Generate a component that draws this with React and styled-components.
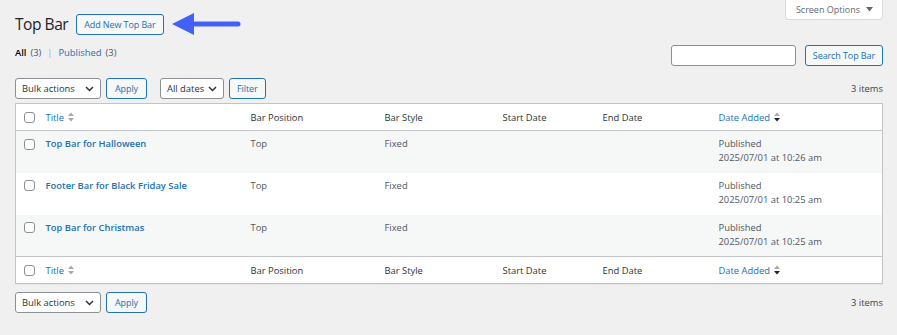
import React from 'react';
import styled, { createGlobalStyle } from 'styled-components';

const GlobalStyle = createGlobalStyle`
  body {
    margin: 0;
    background: #f0f0f1;
    font-family: "Open Sans", "Liberation Sans", sans-serif;
    font-size: 9.4px;
    color: #3c434a;
  }
`;

const Wrap = styled.div`
  padding: 0 14px 0 15px;
`;

const Top = styled.div`
  display: flex;
  justify-content: space-between;
  align-items: flex-start;
`;

const TitleRow = styled.div`
  display: flex;
  align-items: center;
  gap: 8px;
  padding-top: 13px;
`;

const Heading = styled.h1`
  margin: 0 0 1px;
  font-size: 15.6px;
  font-weight: 400;
  letter-spacing: -0.5px;
  line-height: 20px;
  color: #1d2327;
`;

const Button = styled.button`
  height: 21px;
  padding: 0 ${p => p.$px || 7}px;
  border: 1px solid #2271b1;
  border-radius: 3px;
  background: #f6f7f7;
  color: #2271b1;
  font-family: inherit;
  font-size: 9px;
  letter-spacing: -0.1px;
  line-height: 1;
  cursor: pointer;
`;

const ScreenTab = styled.div`
  display: flex;
  align-items: center;
  gap: 6px;
  height: 20px;
  padding: 0 9px 0 10px;
  background: #fff;
  border: 1px solid #dcdcde;
  border-top: none;
  border-radius: 0 0 4px 4px;
  color: #646970;
  font-size: 9px;
  box-sizing: border-box;
`;

const SubRow = styled.div`
  display: flex;
  justify-content: space-between;
  align-items: flex-start;
  margin-top: 10px;
`;

const SubSub = styled.div`
  display: flex;
  align-items: center;
  gap: 4px;
  color: #50575e;
  padding-top: 1px;
`;

const Current = styled.span`
  color: #000;
  font-weight: 600;
`;

const Sep = styled.span`
  color: #a7aaad;
  margin: 0 2px;
`;

const Link = styled.a`
  color: #2271b1;
  text-decoration: none;
  font-weight: ${p => (p.$bold ? 600 : 400)};
`;

const SearchBox = styled.div`
  display: flex;
  gap: 9px;
`;

const Input = styled.input`
  width: 125px;
  height: 21px;
  box-sizing: border-box;
  border: 1px solid #8c8f94;
  border-radius: 3px;
  background: #fff;
`;

const Nav = styled.div`
  display: flex;
  justify-content: space-between;
  align-items: center;
  margin: ${p => p.$m};
`;

const Actions = styled.div`
  display: flex;
  align-items: center;
  gap: 5px;
  margin-right: ${p => p.$mr || 0}px;
`;

const Group = styled.div`
  display: flex;
  align-items: center;
`;

const Select = styled.div`
  display: flex;
  align-items: center;
  justify-content: space-between;
  width: ${p => p.$w}px;
  height: 21px;
  box-sizing: border-box;
  padding: 0 6px;
  border: 1px solid #8c8f94;
  border-radius: 3px;
  background: #fff;
  color: #2c3338;
`;

const Count = styled.span`
  color: #3c434a;
`;

const Table = styled.table`
  width: 100%;
  table-layout: fixed;
  border-collapse: collapse;
  background: #fff;
  border: 1px solid #c3c4c7;
  box-shadow: 0 1px 1px rgba(0, 0, 0, 0.04);
`;

const Th = styled.th`
  height: 27px;
  padding: 0 ${p => (p.$check ? '0 0 8px' : '7px')};
  text-align: left;
  font-weight: 400;
  color: #2c3338;
  border-${p => p.$side}: 1px solid #c3c4c7;
  box-sizing: border-box;
`;

const Tr = styled.tr`
  background: ${p => (p.$alt ? '#f6f7f7' : '#fff')};
`;

const Td = styled.td`
  height: 42px;
  padding: ${p => (p.$check ? '6px 0 0 8px' : '6px 7px 0')};
  vertical-align: top;
  color: #50575e;
  line-height: 14px;
  box-sizing: border-box;
`;

const CheckCell = styled.div`
  display: flex;
  align-items: center;
  height: ${p => p.$h}px;
`;

const Box = styled.span`
  display: block;
  flex-shrink: 0;
  width: 11px;
  height: 11px;
  box-sizing: border-box;
  border: 1px solid #8c8f94;
  border-radius: 3px;
  background: #fff;
`;

const Sortable = styled.span`
  display: inline-flex;
  align-items: center;
  gap: 4px;
  color: #2271b1;
`;

const Chevron = () => (
  <svg width="9" height="6" viewBox="0 0 9 6">
    <path d="M1 1l3.5 3.5L8 1" fill="none" stroke="#2c3338" strokeWidth="1.5" />
  </svg>
);

const SortIcon = ({ active }) => (
  <svg width="6" height="10" viewBox="0 0 6 10">
    <path d="M0 4L3 0.5L6 4z" fill="#a7aaad" />
    <path d="M0 6L3 9.5L6 6z" fill={active ? '#1d2327' : '#a7aaad'} />
  </svg>
);

const Arrow = () => (
  <svg width="70" height="22" viewBox="0 0 70 22">
    <path d="M0 11L22 0V22z" fill="#4262f5" />
    <path d="M18 11H66" stroke="#4262f5" strokeWidth="5" strokeLinecap="round" />
  </svg>
);

const rows = [
  { title: 'Top Bar for Halloween', time: '10:26 am' },
  { title: 'Footer Bar for Black Friday Sale', time: '10:25 am' },
  { title: 'Top Bar for Christmas', time: '10:25 am' },
];

const HeadRow = ({ side }) => (
  <tr>
    <Th $side={side} $check>
      <CheckCell $h={12}><Box /></CheckCell>
    </Th>
    <Th $side={side}>
      <Sortable>Title <SortIcon /></Sortable>
    </Th>
    <Th $side={side}>Bar Position</Th>
    <Th $side={side}>Bar Style</Th>
    <Th $side={side}>Start Date</Th>
    <Th $side={side}>End Date</Th>
    <Th $side={side}>
      <Sortable>Date Added <SortIcon active /></Sortable>
    </Th>
  </tr>
);

export default function App() {
  return (
    <Wrap>
      <GlobalStyle />
      <Top>
        <TitleRow>
          <Heading>Top Bar</Heading>
          <Button $px={7}>Add New Top Bar</Button>
          <Arrow />
        </TitleRow>
        <ScreenTab>
          Screen Options
          <svg width="7" height="5" viewBox="0 0 7 5"><path d="M0 0h7L3.5 4.5z" fill="#646970" /></svg>
        </ScreenTab>
      </Top>

      <SubRow>
        <SubSub>
          <Current>All</Current> (3)
          <Sep>|</Sep>
          <Link href="#">Published</Link> (3)
        </SubSub>
        <SearchBox>
          <Input />
          <Button $px={7}>Search Top Bar</Button>
        </SearchBox>
      </SubRow>

      <Nav $m="12px 0 4px">
        <Group>
          <Actions $mr={13}>
            <Select $w={86}>Bulk actions <Chevron /></Select>
            <Button $px={8}>Apply</Button>
          </Actions>
          <Actions>
            <Select $w={64}>All dates <Chevron /></Select>
            <Button $px={7}>Filter</Button>
          </Actions>
        </Group>
        <Count>3 items</Count>
      </Nav>

      <Table>
        <colgroup>
          <col style={{ width: 23 }} />
          <col style={{ width: 205 }} />
          <col style={{ width: 134 }} />
          <col style={{ width: 118 }} />
          <col style={{ width: 100 }} />
          <col style={{ width: 116 }} />
          <col />
        </colgroup>
        <thead>
          <HeadRow side="bottom" />
        </thead>
        <tbody>
          {rows.map((r, i) => (
            <Tr key={r.title} $alt={i % 2 === 0}>
              <Td $check>
                <CheckCell $h={14}><Box /></CheckCell>
              </Td>
              <Td><Link href="#" $bold>{r.title}</Link></Td>
              <Td>Top</Td>
              <Td>Fixed</Td>
              <Td />
              <Td />
              <Td>Published<br />2025/07/01 at {r.time}</Td>
            </Tr>
          ))}
        </tbody>
        <tfoot>
          <HeadRow side="top" />
        </tfoot>
      </Table>

      <Nav $m="8px 0 0">
        <Actions>
          <Select $w={86}>Bulk actions <Chevron /></Select>
          <Button $px={8}>Apply</Button>
        </Actions>
        <Count>3 items</Count>
      </Nav>
    </Wrap>
  );
}
